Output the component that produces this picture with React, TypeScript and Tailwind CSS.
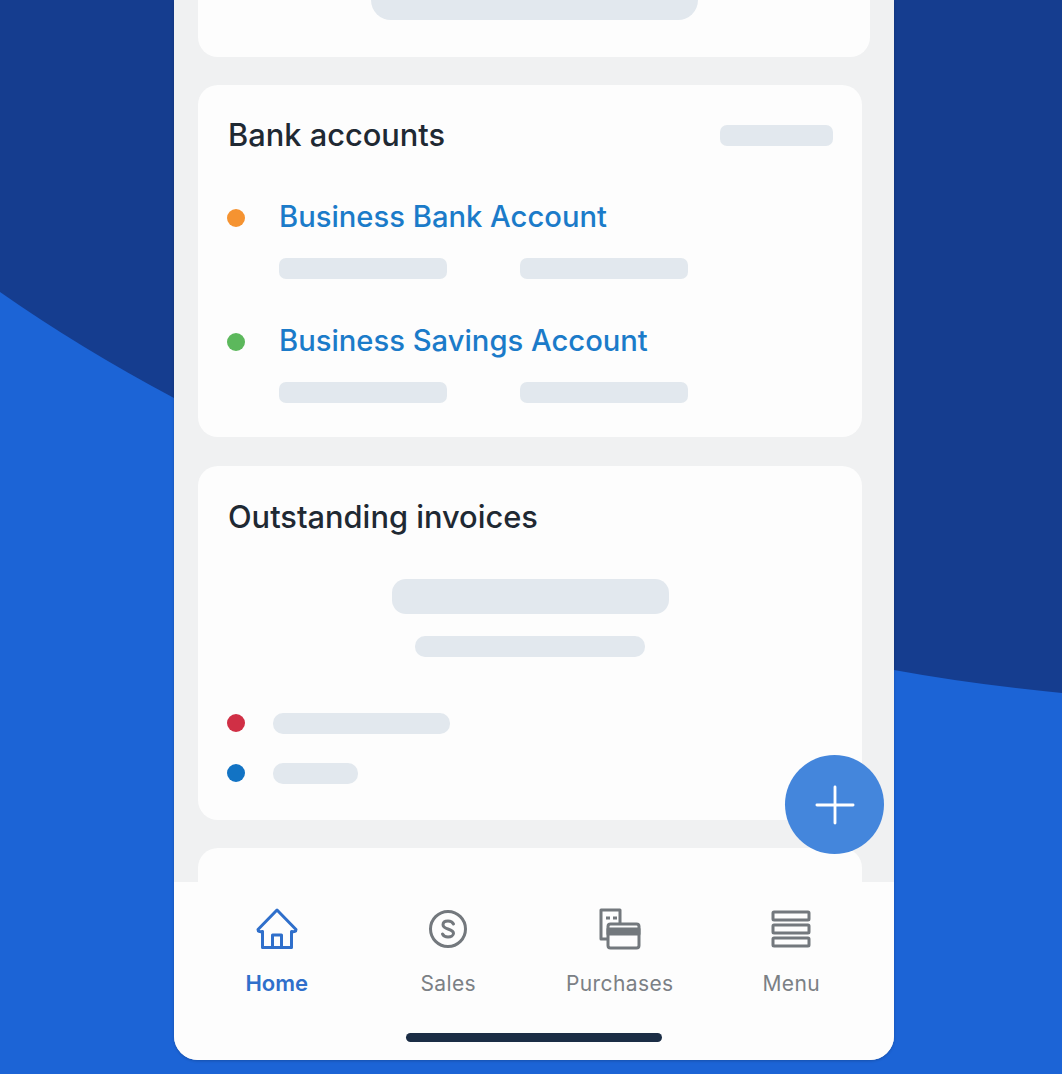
import { Plus } from "lucide-react";

function Bar({ className }: { className: string }) {
  return <div className={`bg-[#e2e8ee] ${className}`} />;
}

function AccountRow({ dot, name }: { dot: string; name: string }) {
  return (
    <div className="flex items-start">
      <div className={`mt-[14px] -ml-[1px] h-[18px] w-[18px] rounded-full ${dot}`} />
      <div className="ml-[34px]">
        <p className="h-[44px] text-[29.2px] leading-[44px] font-medium text-[#1b7bc9]">{name}</p>
        <div className="mt-[19px] flex gap-[73px]">
          <Bar className="h-[21px] w-[168px] rounded-[7px]" />
          <Bar className="h-[21px] w-[168px] rounded-[7px]" />
        </div>
      </div>
    </div>
  );
}

function LegendRow({ dot, width }: { dot: string; width: string }) {
  return (
    <div className="-ml-[1px] flex h-[50px] items-center">
      <div className={`h-[18px] w-[18px] rounded-full ${dot}`} />
      <Bar className={`ml-[28px] h-[21px] rounded-[10px] ${width}`} />
    </div>
  );
}

function NavItem({ label, active, icon }: { label: string; active?: boolean; icon: React.ReactNode }) {
  return (
    <div className="flex flex-col items-center">
      <div className="flex h-[44px] items-center justify-center">{icon}</div>
      <span className={`leading-[28px] ${active ? "mt-[18px] text-[22px] font-semibold text-[#2f6fcb]" : "mt-[19px] text-[21px] font-normal tracking-[0.4px] text-[#7b8085]"}`}>
        {label}
      </span>
    </div>
  );
}

export default function App() {
  return (
    <div className="relative flex h-[1074px] w-full justify-center overflow-hidden bg-[#1c64d6] pl-[6px] font-['Inter',sans-serif]">
      {/* background shape */}
      <svg className="absolute inset-0 h-full w-full" viewBox="0 0 1062 1074" preserveAspectRatio="none">
        <path d="M0 0H1062V693Q970 684 894 670L174 398Q80 348 0 292Z" fill="#153d8f" />
      </svg>

      <div className="relative mb-[14px] flex w-[720px] flex-col overflow-hidden rounded-b-[24px] bg-[#f0f1f2] shadow-[0_1px_3px_rgba(0,0,0,0.2)]">
        <div className="flex flex-1 flex-col overflow-hidden px-[24px]">
          <div className="flex h-[57px] shrink-0 justify-center rounded-b-[20px] bg-[#fdfdfd]">
            <Bar className="h-[20px] w-[327px] rounded-b-[24px]" />
          </div>

          <div className="mt-[28px] h-[352px] w-[664px] shrink-0 rounded-[20px] bg-[#fdfdfd] px-[30px] pt-[30px]">
            <div className="flex items-center justify-between">
              <h2 className="text-[30.800px] leading-[40px] font-medium text-[#1f2933]">Bank accounts</h2>
              <Bar className="mr-[-1px] h-[21px] w-[113px] rounded-[7px]" />
            </div>
            <div className="mt-[40px] flex flex-col gap-[40px]">
              <AccountRow dot="bg-[#f59331]" name="Business Bank Account" />
              <AccountRow dot="bg-[#5cb85c]" name="Business Savings Account" />
            </div>
          </div>

          <div className="mt-[29px] h-[354px] w-[664px] shrink-0 rounded-[20px] bg-[#fdfdfd] px-[30px] pt-[31px]">
            <h2 className="text-[30.800px] leading-[40px] font-medium text-[#1f2933]">Outstanding invoices</h2>
            <div className="mt-[42px] flex flex-col items-center">
              <Bar className="h-[35px] w-[277px] rounded-[14px]" />
              <Bar className="mt-[22px] h-[21px] w-[230px] rounded-[10px]" />
            </div>
            <div className="mt-[41px] flex flex-col">
              <LegendRow dot="bg-[#d02f45]" width="w-[177px]" />
              <LegendRow dot="bg-[#1273c4]" width="w-[85px]" />
            </div>
          </div>

          <div className="mt-[28px] h-[60px] w-[664px] shrink-0 rounded-t-[20px] bg-[#fdfdfd]" />
        </div>

        <div className="flex h-[178px] shrink-0 flex-col bg-[#fdfdfd]">
          <div className="grid grid-cols-4 px-[17px] pt-[25px]">
            <NavItem
              label="Home"
              active
              icon={
                <svg width="42" height="42" viewBox="0 0 42 42" fill="none" stroke="#2f6fcb" strokeWidth="3" strokeLinejoin="round" strokeLinecap="round">
                  <path d="M21 2L2 21.500C2 23.500 3.500 24 6.500 23.500V39.500H35.500V23.500C38.500 24 40 23.500 40 21.500Z" />
                  <path d="M16.500 39.500V27H25.500V39.500" />
                </svg>
              }
            />
            <NavItem
              label="Sales"
              icon={
                <svg width="40" height="40" viewBox="0 0 40 40" fill="none" stroke="#73787d" strokeWidth="3">
                  <circle cx="20" cy="20" r="17.500" />
                  <path d="M25.500 15C24.500 13 22.500 12 20 12C17 12 15 13.500 15 15.700C15 18 17 19 20 20C23 21 25.500 22 25.500 24.300C25.500 26.500 23 28 20 28C17.500 28 15.500 27 14.500 25" strokeLinecap="round" />
                </svg>
              }
            />
            <NavItem
              label="Purchases"
              icon={
                <svg width="42" height="42" viewBox="0 0 42 42" fill="none" stroke="#73787d" strokeWidth="3" strokeLinejoin="round">
                  <path d="M8 31H2V2H21V15" />
                  <path d="M7 10H11M14 10H18" />
                  <rect x="9" y="16" width="31" height="24" rx="2.500" />
                  <rect x="9" y="21" width="31" height="5" fill="#73787d" />
                </svg>
              }
            />
            <NavItem
              label="Menu"
              icon={
                <svg width="40" height="40" viewBox="0 0 40 40" fill="none" stroke="#73787d" strokeWidth="3">
                  <rect x="2" y="3" width="36" height="8" rx="1" />
                  <rect x="2" y="16" width="36" height="8" rx="1" />
                  <rect x="2" y="29" width="36" height="8" rx="1" />
                </svg>
              }
            />
          </div>
          <div className="mx-auto mt-[35px] h-[9px] w-[256px] rounded-full bg-[#1b2d45]" />
        </div>

        {/* floating add button */}
        <div className="absolute top-[755px] left-[611px] flex h-[99px] w-[99px] items-center justify-center rounded-full bg-[#4486dc]">
          <Plus className="h-[62px] w-[62px] text-white" strokeWidth={1.1} />
        </div>
      </div>
    </div>
  );
}
